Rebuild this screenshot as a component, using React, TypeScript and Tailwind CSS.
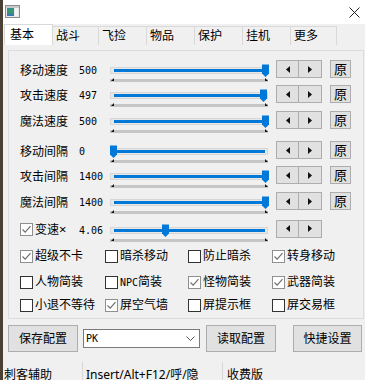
import React from 'react';

// settings panel of a small desktop helper tool, drawn as a classic Win32 dialog

const TABS = [
  { name: '基本', w: 'w-[49px]' },
  { name: '战斗', w: 'w-[46px]' },
  { name: '飞捡', w: 'w-[48px]' },
  { name: '物品', w: 'w-[48px]' },
  { name: '保护', w: 'w-[48px]' },
  { name: '挂机', w: 'w-[48px]' },
  { name: '更多', w: 'w-[46px]' },
];

const SLIDERS = [
  { label: '移动速度', value: '500', pos: 1, reset: true, mt: 'mt-[9px]' },
  { label: '攻击速度', value: '497', pos: 0.99, reset: true, mt: 'mt-[7px]' },
  { label: '魔法速度', value: '500', pos: 1, reset: true, mt: 'mt-[8px]' },
  { label: '移动间隔', value: '0', pos: 0, reset: true, mt: 'mt-[12px]' },
  { label: '攻击间隔', value: '1400', pos: 1, reset: true, mt: 'mt-[7px]' },
  { label: '魔法间隔', value: '1400', pos: 1, reset: true, mt: 'mt-[8px]' },
];

const OPTIONS: [string, boolean][][] = [
  [['超级不卡', true], ['暗杀移动', false], ['防止暗杀', false], ['转身移动', true]],
  [['人物简装', false], ['NPC简装', false], ['怪物简装', true], ['武器简装', true]],
  [['小退不等待', false], ['屏空气墙', true], ['屏提示框', false], ['屏交易框', false]],
];

const AppIcon = () => (
  <svg width="15" height="13" viewBox="0 0 15 13">
    <defs>
      <linearGradient id="ic" x1="0" y1="0" x2="0" y2="1">
        <stop offset="0" stopColor="#2f8f8a" />
        <stop offset="0.5" stopColor="#3a9a6a" />
        <stop offset="1" stopColor="#3b6fc0" />
      </linearGradient>
    </defs>
    <rect x="0.5" y="0.5" width="14" height="12" fill="#e8e8e8" stroke="#8c8c8c" />
    <rect x="1" y="1" width="13" height="2" fill="#c9c9c9" />
    <rect x="2" y="3" width="7" height="8" fill="url(#ic)" />
    <rect x="10" y="3" width="3" height="8" fill="#f4f4f4" />
  </svg>
);

const Check = ({ on }: { on: boolean }) =>
  on ? (
    <span className="flex h-[13px] w-[13px] shrink-0 items-center justify-center border border-[#8f8f8f] bg-white">
      <svg width="11" height="11" viewBox="0 0 11 11">
        <path d="M1.5 5.5 L4.2 8.2 L9.5 2.2" fill="none" stroke="#6f6f6f" strokeWidth="1.2" />
      </svg>
    </span>
  ) : (
    <span className="h-[13px] w-[13px] shrink-0 border border-[#333333] bg-white" />
  );

const Slider = ({ pos }: { pos: number }) => (
  <div className="relative h-[18px] w-[158px] shrink-0">
    <div className="absolute left-0 right-0 top-[7px] h-[7px] border border-[#d6d6d6] bg-[#e7e7e7]" />
    <div className="absolute left-[4px] right-[3px] top-[9px] h-[3px] bg-[#0078d7]" />
    <div className="absolute left-0 right-0 top-[19px] h-[3px] bg-[#c6c6c6]" />
    <svg className="absolute left-[1px] top-[18px]" width="3" height="3" viewBox="0 0 3 3">
      <polygon points="0,3 3,0 3,3" fill="#111" />
    </svg>
    <svg className="absolute left-[155px] top-[18px]" width="3" height="3" viewBox="0 0 3 3">
      <polygon points="0,0 3,3 0,3" fill="#111" />
    </svg>
    <svg
      className="absolute top-[4px]"
      style={{ left: Math.round(pos * 152) }}
      width="7"
      height="13"
      viewBox="0 0 7 13"
    >
      <polygon points="0,0.5 7,0.5 7,9.5 3.5,13 0,9.5" fill="#0078d7" />
    </svg>
  </div>
);

const Stepper = () => (
  <div className="ml-[8px] flex h-[18px] shrink-0">
    <button className="flex h-full w-[23px] items-center justify-center border border-[#adadad] bg-[#e1e1e1]">
      <svg width="4" height="7" viewBox="0 0 4 7">
        <polygon points="4,0 4,7 0,3.5" fill="#111" />
      </svg>
    </button>
    <button className="flex h-full w-[23px] items-center justify-center border border-l-0 border-[#adadad] bg-[#e1e1e1]">
      <svg width="4" height="7" viewBox="0 0 4 7">
        <polygon points="0,0 0,7 4,3.5" fill="#111" />
      </svg>
    </button>
  </div>
);

const ResetBtn = () => (
  <button className="ml-[8px] flex h-[18px] w-[21px] shrink-0 items-center justify-center border border-[#adadad] bg-[#e1e1e1] text-[13px] leading-none text-black">
    原
  </button>
);

const Button = ({ text, cls }: { text: string; cls: string }) => (
  <button
    className={`flex h-[27px] shrink-0 items-center justify-center border border-[#adadad] bg-[#e1e1e1] text-[12px] leading-none text-black ${cls}`}
  >
    {text}
  </button>
);

export default function App() {
  return (
    <div className="flex h-[380px] w-[365px] overflow-hidden bg-[#f0f0f0] font-['Noto_Sans','Noto_Sans_CJK_SC',sans-serif] text-black">
      <div className="w-[3px] shrink-0 bg-[#4b4034]" />
      <div className="flex min-w-0 flex-1 flex-col">
        {/* title bar */}
        <div className="flex h-[24px] shrink-0 items-center justify-between bg-white">
          <div className="ml-[2px] mt-[-1px]">
            <AppIcon />
          </div>
          <svg className="mr-[5px]" width="11" height="11" viewBox="0 0 11 11">
            <path d="M0.5 0.5 L10.5 10.5 M10.5 0.5 L0.5 10.5" stroke="#222" strokeWidth="1" />
          </svg>
        </div>

        {/* tabs */}
        <div className="flex h-[21px] shrink-0 items-end pl-[1px]">
          {TABS.map((t, i) =>
            i === 0 ? (
              <div
                key={t.name}
                className={`flex h-[21px] items-center border border-b-0 border-[#d9d9d9] bg-white pl-[5px] text-[12px] leading-none ${t.w}`}
              >
                {t.name}
              </div>
            ) : (
              <div
                key={t.name}
                className={`flex h-[19px] items-center border-r border-t border-[#d9d9d9] pl-[3px] text-[12px] leading-none ${t.w}`}
              >
                {t.name}
              </div>
            )
          )}
        </div>

        {/* group box */}
        <div className="ml-[5px] mt-[5px] flex h-[269px] w-[356px] shrink-0 flex-col border border-[#dcdcdc]">
          {SLIDERS.map((s) => (
            <div key={s.label} className={`flex h-[18px] shrink-0 items-center ${s.mt}`}>
              <span className="ml-[11px] w-[59px] pt-[4px] text-[12px] leading-none">{s.label}</span>
              <span className="w-[31px] pt-[4px] font-['DejaVu_Sans_Mono',monospace] text-[10px] leading-none">
                {s.value}
              </span>
              <Slider pos={s.pos} />
              <Stepper />
              {s.reset && <ResetBtn />}
            </div>
          ))}

          <div className="mt-[9px] flex h-[19px] shrink-0 items-center">
            <span className="ml-[11px] flex w-[59px] items-center gap-[2px] pt-[2px] text-[12px] leading-none">
              <Check on />
              <span>变速<span className="text-[13px]">×</span></span>
            </span>
            <span className="w-[31px] pt-[4px] font-['DejaVu_Sans_Mono',monospace] text-[10px] leading-none">
              4.06
            </span>
            <Slider pos={52 / 152} />
            <Stepper />
          </div>

          <div className="ml-[11px] mt-[10px] flex flex-col">
            {OPTIONS.map((row, r) => (
              <div
                key={r}
                className={`grid h-[16px] grid-cols-[85px_83px_84px_auto] items-center ${
                  r === 1 ? 'mt-[10px]' : r === 2 ? 'mt-[7px]' : ''
                }`}
              >
                {row.map(([name, on]) => (
                  <div key={name} className="flex items-center gap-[2px] text-[12px] leading-none">
                    <Check on={on} />
                    {name.startsWith('NPC') ? (
                      <span>
                        <span className="font-['DejaVu_Sans_Mono',monospace] text-[10px]">NPC</span>简装
                      </span>
                    ) : (
                      <span>{name}</span>
                    )}
                  </div>
                ))}
              </div>
            ))}
          </div>
        </div>

        {/* bottom buttons */}
        <div className="mt-[6px] flex h-[27px] shrink-0 items-start">
          <Button text="保存配置" cls="ml-[5px] w-[70px]" />
          <div className="ml-[5px] mt-[4px] flex h-[19px] w-[117px] shrink-0 items-center justify-between border border-[#7a7a7a] bg-white pl-[2px] pr-[4px]">
            <span className="font-['DejaVu_Sans_Mono',monospace] text-[10px] leading-none">PK</span>
            <svg width="9" height="5" viewBox="0 0 9 5">
              <path d="M0.5 0.5 L4.5 4.5 L8.5 0.5" fill="none" stroke="#555" strokeWidth="1" />
            </svg>
          </div>
          <Button text="读取配置" cls="ml-[6px] w-[70px]" />
          <Button text="快捷设置" cls="ml-[17px] w-[69px]" />
        </div>

        {/* status bar */}
        <div className="mt-[10px] flex h-[26px] shrink-0 items-center text-[12px] leading-none">
          <div className="flex h-full w-[79px] items-center pl-[1px]">刺客辅助</div>
          <div className="flex h-full w-[140px] items-center border-l border-[#d7d7d7] pl-[3px]">
            Insert/Alt+F12/呼/隐
          </div>
          <div className="flex h-full flex-1 items-center border-l border-[#d7d7d7] pl-[4px]">收费版</div>
        </div>
      </div>
    </div>
  );
}
